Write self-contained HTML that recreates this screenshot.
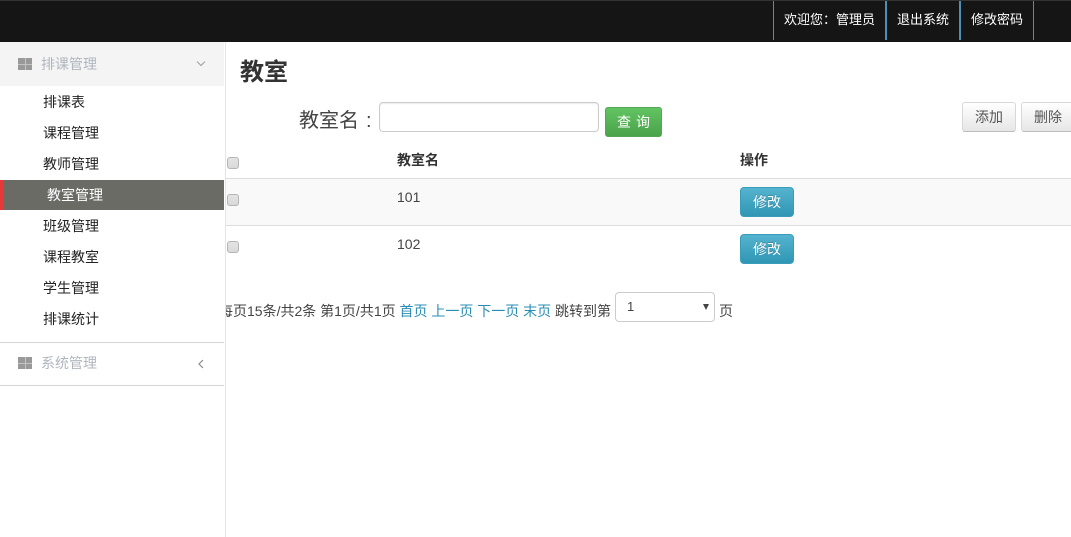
<!DOCTYPE html>
<html lang="zh">
<head>
<meta charset="utf-8">
<title>教室</title>
<style>
html,body{margin:0;padding:0;background:#fff}
body{position:relative;width:1071px;height:537px;overflow:hidden;font-family:"Liberation Sans","Noto Sans CJK SC",sans-serif;font-size:13px;color:#333}
.a{position:absolute;white-space:nowrap}
#top{left:0;top:0;width:1071px;height:42px;background:#151515;border-top:1px solid #333;box-sizing:border-box}
.sep{position:absolute;top:0;width:1px;height:39px;background:#4d8fb5}
.nav{position:absolute;top:11px;color:#fff;font-size:13px;line-height:16px}
#side{left:0;top:42px;width:225px;height:495px;background:#fff;border-right:1px solid #e5e5e5;z-index:5}
.mi{position:absolute;left:43px;font-size:14px;line-height:20px;color:#222}
.grp{position:absolute;left:41px;font-size:14px;line-height:20px;color:#b0b6be}
.grid{position:absolute;left:18px;width:14px;height:12px;background:
linear-gradient(#c4c4c4,#c4c4c4) 7px 0/1px 12px no-repeat,linear-gradient(#c4c4c4,#c4c4c4) 0 6px/14px 1px no-repeat,#999}
.cb{position:absolute;left:227px;width:12px;height:12px;box-sizing:border-box;border:1px solid #b5b5b5;border-radius:3px;background:linear-gradient(#e4e4e4,#d9d9d9)}
.edit{position:absolute;left:740px;width:54px;height:30px;box-sizing:border-box;border:1px solid #3a9cbb;border-radius:4px;background:linear-gradient(#55b4d0,#2f96b4);color:#fff;font-size:14px;line-height:29px;text-align:center;text-shadow:0 -1px 0 rgba(0,0,0,.2)}
.gbtn{position:absolute;top:102px;height:30px;box-sizing:border-box;border:1px solid #d8d8d8;border-bottom-color:#bdbdbd;border-radius:3px;background:linear-gradient(#fff,#e6e6e6);color:#555;font-size:14px;line-height:29px;text-align:center}
a{color:#2a8cb5;text-decoration:none}
</style>
</head>
<body>
<div class="a" id="top">
<div class="sep" style="left:773px"></div>
<div class="nav" style="left:784px">欢迎您：管理员</div>
<div class="sep" style="left:885px;width:2px"></div>
<div class="nav" style="left:897px">退出系统</div>
<div class="sep" style="left:959px;width:2px"></div>
<div class="nav" style="left:971px">修改密码</div>
<div class="sep" style="left:1033px"></div>
</div>

<div class="a" id="side">
<div style="position:absolute;left:0;top:0;width:224px;height:44px;background:#f4f4f4"></div>
<div class="grid" style="top:16px"></div>
<div class="grp" style="top:12px">排课管理</div>
<svg style="position:absolute;left:195px;top:18px" width="12" height="8" viewBox="0 0 12 8"><path d="M2 1.5L6 5.5L10 1.5" fill="none" stroke="#a5a5a5" stroke-width="1.2"/></svg>
<div class="mi" style="top:50px">排课表</div>
<div class="mi" style="top:81px">课程管理</div>
<div class="mi" style="top:112px">教师管理</div>
<div style="position:absolute;left:0;top:138px;width:224px;height:30px;background:#6b6b66"></div>
<div style="position:absolute;left:0;top:138px;width:4px;height:30px;background:#e5383b"></div>
<div class="mi" style="left:47px;top:143px;color:#fff">教室管理</div>
<div class="mi" style="top:174px">班级管理</div>
<div class="mi" style="top:205px">课程教室</div>
<div class="mi" style="top:236px">学生管理</div>
<div class="mi" style="top:267px">排课统计</div>
<div style="position:absolute;left:0;top:300px;width:224px;height:1px;background:#d4d4d4"></div>
<div class="grid" style="top:315px"></div>
<div class="grp" style="top:311px">系统管理</div>
<svg style="position:absolute;left:197px;top:316px" width="8" height="12" viewBox="0 0 8 12"><path d="M6 2L2 6L6 10" fill="none" stroke="#8a8a8a" stroke-width="1.2"/></svg>
<div style="position:absolute;left:0;top:343px;width:224px;height:1px;background:#d4d4d4"></div>
</div>

<div class="a" style="left:240px;top:56px;font-size:24px;line-height:34px;font-weight:bold;color:#333">教室</div>
<div class="a" style="left:299px;top:106px;font-size:20px;line-height:30px;color:#444">教室名</div>
<div class="a" style="left:366px;top:106px;font-size:20px;line-height:30px;color:#444">:</div>
<div class="a" style="left:379px;top:102px;width:220px;height:30px;box-sizing:border-box;border:1px solid #ccc;border-radius:4px;background:#fff;box-shadow:inset 0 1px 1px rgba(0,0,0,.075)"></div>
<div class="a" style="left:605px;top:107px;width:57px;height:30px;box-sizing:border-box;border:1px solid #55a555;border-radius:3px;background:linear-gradient(#62c462,#4aa34a);color:#fff;font-size:14px;line-height:29px;padding-left:11px;letter-spacing:5px">查询</div>

<div class="gbtn" style="left:962px;width:54px">添加</div>
<div class="gbtn" style="left:1021px;width:54px">删除</div>

<div class="cb" style="top:157px"></div>
<div class="a" style="left:397px;top:152px;font-size:14px;line-height:16px;font-weight:bold;color:#333">教室名</div>
<div class="a" style="left:740px;top:152px;font-size:14px;line-height:16px;font-weight:bold;color:#333">操作</div>
<div class="a" style="left:226px;top:178px;width:845px;height:1px;background:#ddd"></div>
<div class="a" style="left:226px;top:179px;width:845px;height:46px;background:#f9f9f9"></div>
<div class="a" style="left:226px;top:225px;width:845px;height:1px;background:#ddd"></div>
<div class="cb" style="top:194px"></div>
<div class="a" style="left:397px;top:189px;font-size:14px;line-height:16px;color:#444">101</div>
<div class="edit" style="top:187px">修改</div>
<div class="cb" style="top:241px"></div>
<div class="a" style="left:397px;top:236px;font-size:14px;line-height:16px;color:#444">102</div>
<div class="edit" style="top:234px">修改</div>

<div class="a" style="left:219px;top:302px;font-size:14px;line-height:18px;color:#444">每页15条/共2条 第1页/共1页 <a>首页</a> <a>上一页</a> <a>下一页</a> <a>末页</a> 跳转到第</div>
<div class="a" style="left:615px;top:292px;width:100px;height:30px;box-sizing:border-box;border:1px solid #ccc;border-radius:4px;background:#fff;font-size:13px;line-height:28px;padding-left:11px;color:#444">1<span style="position:absolute;left:87px;top:11px;width:0;height:0;border-left:3px solid transparent;border-right:3px solid transparent;border-top:6px solid #444"></span></div>
<div class="a" style="left:719px;top:302px;font-size:14px;line-height:18px;color:#444">页</div>
</body>
</html>
